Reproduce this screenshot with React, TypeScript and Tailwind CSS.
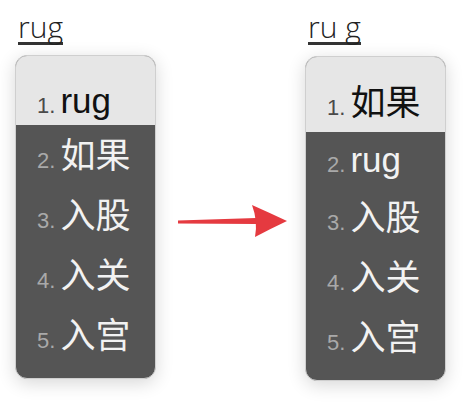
import React from "react";

type Row = { n: number; text: string; h: string };

const cand = { fontFamily: '"Liberation Sans", "Noto Sans CJK SC", sans-serif' };
const label = { fontFamily: '"Open Sans", sans-serif' };

const CandidateRow = ({ n, text, active, h }: Row & { active?: boolean }) => (
  <div className={`${h} flex items-center pl-[21px] ${active ? "bg-[#e6e6e6]" : ""}`}>
    <span className="whitespace-nowrap leading-none" style={cand}>
      <span className={`text-[22px] ${active ? "text-[#4a4a4a]" : "text-[#a9a9a9]"}`}>{n}.</span>
      <span className={`ml-[5px] text-[35px] ${active ? "text-[#111]" : "text-[#f2f2f2]"}`}>{text}</span>
    </span>
  </div>
);

const Panel = ({
  input,
  first,
  rows,
  top,
}: {
  input: string;
  first: Row;
  rows: Row[];
  top: string;
}) => (
  <div className="flex flex-col w-[141px]">
    <div className="pl-[3px]">
      <div
        className="inline-block text-[30px] font-light text-[#222] leading-[30px] pt-[6px] border-b-[3px] border-[#333] whitespace-pre"
        style={label}
      >
        {input}
      </div>
    </div>
    <div
      className={`${top} rounded-[12px] overflow-hidden bg-[#555555] border border-[#cfcfcf] shadow-[0_4px_18px_rgba(0,0,0,0.16)] pb-[13px]`}
    >
      <CandidateRow {...first} active />
      {rows.map((r) => (
        <CandidateRow key={r.n} {...r} />
      ))}
    </div>
  </div>
);

export default function App() {
  return (
    <div className="w-[468px] h-[408px] bg-white flex items-start pl-[15px] pt-[6px]">
      <Panel
        input="rug"
        top="mt-[10px]"
        first={{ n: 1, text: "rug", h: "h-[69px] pt-[20px]" }}
        rows={[
          { n: 2, text: "如果", h: "h-[60px]" },
          { n: 3, text: "入股", h: "h-[60px]" },
          { n: 4, text: "入关", h: "h-[60px]" },
          { n: 5, text: "入宫", h: "h-[60px]" },
        ]}
      />
      <svg className="mt-[195px] ml-[22px]" width="110" height="40" viewBox="0 0 110 40">
        <path d="M0 19.5 L78 17 L78 23 L0 22.5 Z" fill="#e53a40" />
        <path d="M74 4 Q92 12 109 20 Q92 28 77 36 Q80 20 74 4 Z" fill="#e53a40" />
      </svg>
      <div className="ml-[17px]">
        <Panel
          input="ru g"
          top="mt-[11px]"
          first={{ n: 1, text: "如果", h: "h-[75px] pt-[16px]" }}
          rows={[
            { n: 2, text: "rug", h: "h-[55px]" },
            { n: 3, text: "入股", h: "h-[60px]" },
            { n: 4, text: "入关", h: "h-[60px]" },
            { n: 5, text: "入宫", h: "h-[60px]" },
          ]}
        />
      </div>
    </div>
  );
}
